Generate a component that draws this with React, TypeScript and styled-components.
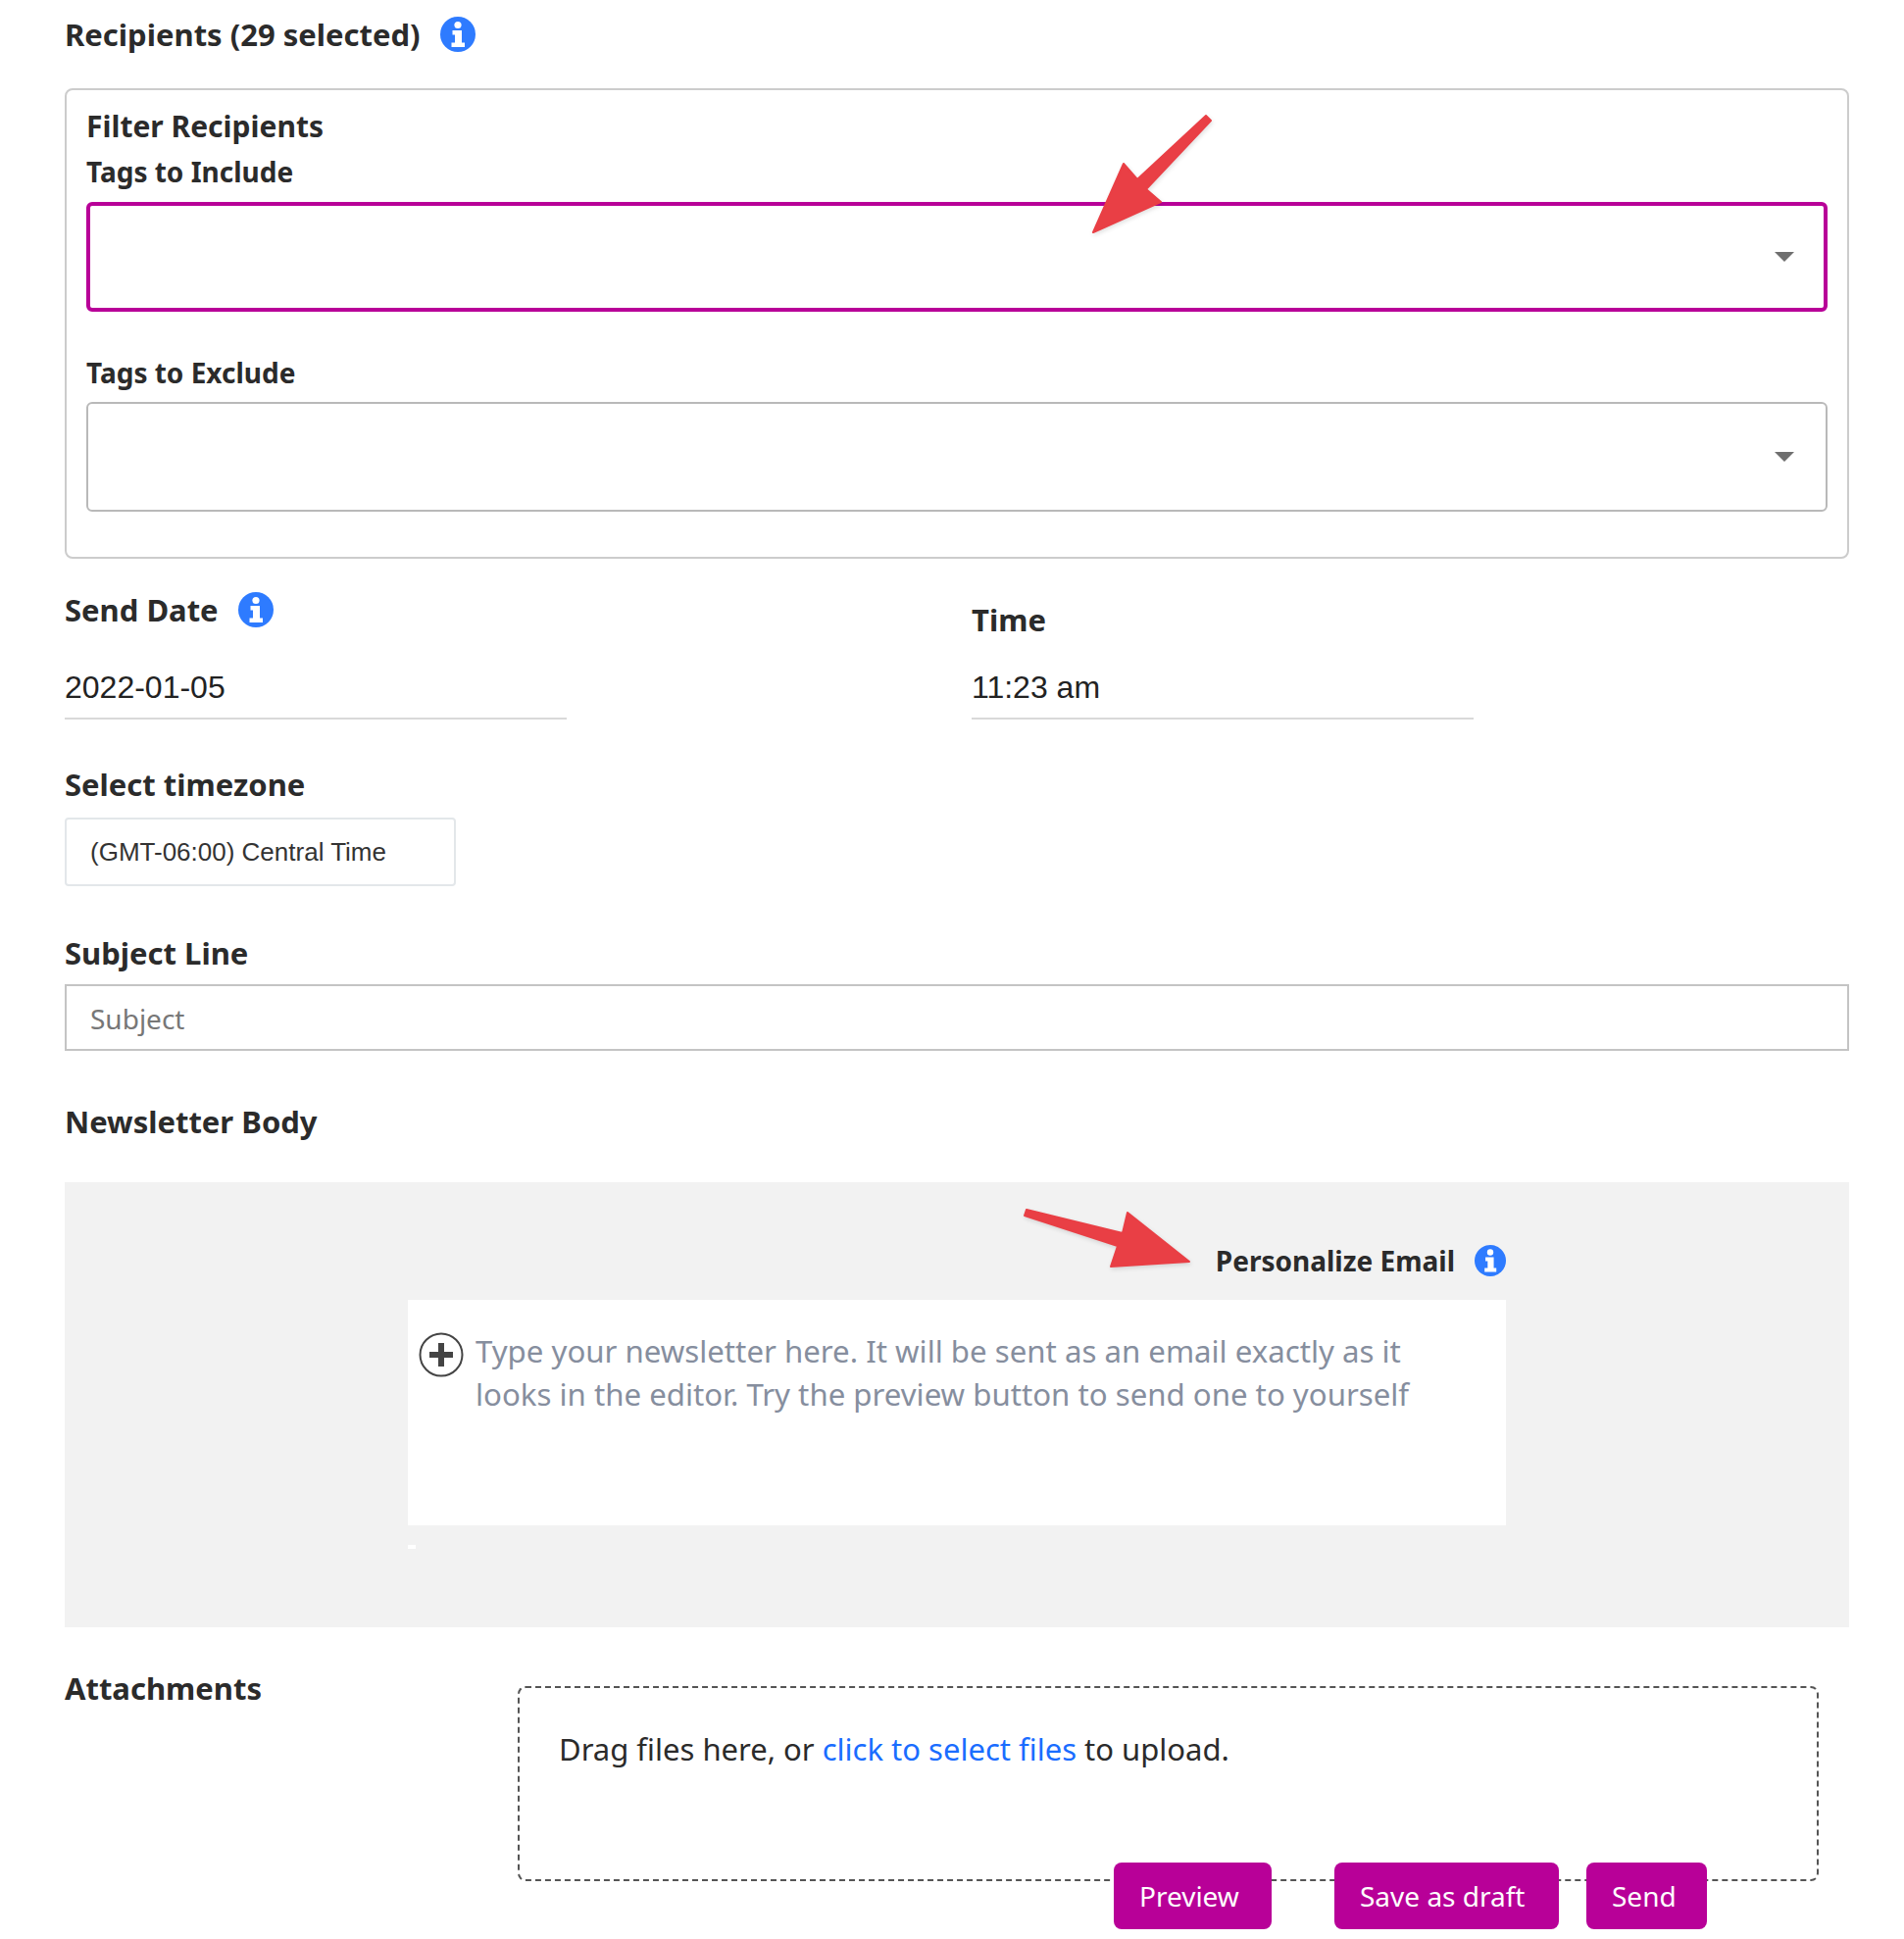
import styled, { createGlobalStyle } from 'styled-components';

const magenta = '#b80098';

const GlobalStyle = createGlobalStyle`
    html, body {
        margin: 0;
        padding: 0;
        background: #fff;
    }
    body {
        font-family: "Noto Sans", "Open Sans", sans-serif;
        color: #2b2b2b;
    }
`
const Page = styled.div`
    position: relative;
    box-sizing: border-box;
    width: 1942px;
    height: 1978px;
    padding: 17px 56px 0 66px;
    overflow: hidden;
`
const Heading = styled.div<{ $top?: number }>`
    display: flex;
    align-items: center;
    gap: 20px;
    height: 36px;
    margin-top: ${p => p.$top || 0}px;
    font-size: 31px;
    font-weight: 700;
    line-height: 36px;
`
const InfoSvg = styled.svg<{ $size?: number }>`
    width: ${p => p.$size || 36}px;
    height: ${p => p.$size || 36}px;
    flex: none;
`
const Filter = styled.div`
    box-sizing: border-box;
    height: 480px;
    margin-top: 37px;
    padding: 21px 20px 0;
    border: 2px solid #cccccc;
    border-radius: 8px;
`
const FilterTitle = styled.div`
    font-size: 30px;
    font-weight: 700;
    line-height: 32px;
`
const SmallLabel = styled.div<{ $top: number }>`
    margin-top: ${p => p.$top}px;
    font-size: 28px;
    font-weight: 700;
    line-height: 30px;
`
const Select = styled.div<{ $active?: boolean; $top: number }>`
    box-sizing: border-box;
    display: flex;
    align-items: center;
    justify-content: flex-end;
    height: 112px;
    margin-top: ${p => p.$top}px;
    padding-right: ${p => (p.$active ? 30 : 32)}px;
    border: ${p => (p.$active ? `4px solid ${magenta}` : '2px solid #b9b9b9')};
    border-radius: 6px;
`
const Caret = styled.span`
    width: 0;
    height: 0;
    border-left: 10px solid transparent;
    border-right: 10px solid transparent;
    border-top: 10px solid #6f6f6f;
`
const DateRow = styled.div`
    display: grid;
    grid-template-columns: 925px 512px;
    margin-top: 34px;
`
const DateColumn = styled.div`
    display: flex;
    flex-direction: column;
`
const DateHead = styled.div<{ $shift?: number }>`
    box-sizing: border-box;
    height: 76px;
    padding-top: ${p => p.$shift || 0}px;
`
const DateValue = styled.div`
    box-sizing: border-box;
    width: 512px;
    height: 54px;
    border-bottom: 2px solid #d9d9d9;
    font-family: "Liberation Sans", Arial, sans-serif;
    font-size: 32px;
    line-height: 43px;
    color: #222;
`
const Label = styled.div<{ $top: number }>`
    margin-top: ${p => p.$top}px;
    font-size: 31px;
    font-weight: 700;
    line-height: 32px;
`
const Timezone = styled.div`
    box-sizing: border-box;
    display: flex;
    align-items: center;
    width: 399px;
    height: 70px;
    margin-top: 18px;
    padding-left: 24px;
    border: 2px solid #e3e7ea;
    border-radius: 4px;
    font-family: "Liberation Sans", Arial, sans-serif;
    font-size: 26px;
    color: #333;
`
const SubjectInput = styled.div`
    box-sizing: border-box;
    display: flex;
    align-items: center;
    height: 68px;
    margin-top: 16px;
    padding: 2px 0 0 24px;
    border: 2px solid #c4c4c4;
    font-size: 28px;
    color: #777;
`
const EditorPanel = styled.div`
    box-sizing: border-box;
    display: flex;
    flex-direction: column;
    align-items: center;
    height: 454px;
    margin-top: 46px;
    padding-top: 60px;
    background: #f2f2f2;
`
const EditorColumn = styled.div`
    width: 1120px;
`
const Personalize = styled.div`
    display: flex;
    align-items: center;
    justify-content: flex-end;
    gap: 20px;
    height: 40px;
    font-size: 28px;
    font-weight: 700;
`
const Editor = styled.div`
    box-sizing: border-box;
    display: flex;
    gap: 12px;
    height: 230px;
    margin-top: 20px;
    padding: 30px 0 0 11px;
    background: #fff;
`
const PlusIcon = styled.svg`
    width: 46px;
    height: 46px;
    margin-top: 3px;
    flex: none;
`
const Placeholder = styled.div`
    font-size: 31.2px;
    line-height: 44px;
    color: #868e9e;
`
const Dash = styled.div`
    width: 8px;
    height: 4px;
    margin-top: 20px;
    background: #fff;
`
const AttachRow = styled.div`
    display: flex;
    margin-top: 46px;
`
const AttachLabel = styled.div`
    width: 462px;
    font-size: 31px;
    font-weight: 700;
    line-height: 32px;
`
const DropZone = styled.div`
    box-sizing: border-box;
    width: 1327px;
    height: 199px;
    margin-top: 14px;
    padding: 40px 0 0 40px;
    border: 2px dashed #555;
    border-radius: 8px;
    font-size: 31px;
    line-height: 44px;
`
const FileLink = styled.a`
    color: #1a6dff;
`
const Actions = styled.div`
    position: relative;
    display: flex;
    margin-top: -19px;
    padding-left: 1070px;
`
const ActionButton = styled.button<{ $width: number; $left?: number }>`
    width: ${p => p.$width}px;
    height: 68px;
    margin-left: ${p => p.$left || 0}px;
    padding: 0 0 0 26px;
    border: none;
    border-radius: 8px;
    background: ${magenta};
    color: #fff;
    font-family: "Noto Sans", sans-serif;
    font-size: 28px;
    text-align: left;
`
const Arrow = styled.svg<{ $left: number; $top: number }>`
    position: absolute;
    left: ${p => p.$left}px;
    top: ${p => p.$top}px;
    overflow: visible;
    filter: drop-shadow(1px 2px 2px rgba(0, 0, 0, 0.12));
`

function InfoIcon({ size }: { size?: number }) {
    return (
        <InfoSvg $size={size} viewBox="0 0 36 36">
            <circle cx="18" cy="18" r="18" fill="#2e7bff" />
            <circle cx="18" cy="8.5" r="3.6" fill="#fff" />
            <path d="M12.5 14h9.5v12.5h3V31H11.5v-4.5h3.5v-8h-2.500z" fill="#fff" />
        </InfoSvg>
    )
}

function App() {
    return (
        <>
            <GlobalStyle />
            <Page>
                <Heading>
                    Recipients (29 selected)
                    <InfoIcon />
                </Heading>
                <Filter>
                    <FilterTitle>Filter Recipients</FilterTitle>
                    <SmallLabel $top={15}>Tags to Include</SmallLabel>
                    <Select $active $top={16}><Caret /></Select>
                    <SmallLabel $top={47}>Tags to Exclude</SmallLabel>
                    <Select $top={15}><Caret /></Select>
                </Filter>
                <DateRow>
                    <DateColumn>
                        <DateHead>
                            <Heading>
                                Send Date
                                <InfoIcon />
                            </Heading>
                        </DateHead>
                        <DateValue>2022-01-05</DateValue>
                    </DateColumn>
                    <DateColumn>
                        <DateHead $shift={10}>
                            <Heading>Time</Heading>
                        </DateHead>
                        <DateValue>11:23 am</DateValue>
                    </DateColumn>
                </DateRow>
                <Label $top={50}>Select timezone</Label>
                <Timezone>(GMT-06:00) Central Time</Timezone>
                <Label $top={52}>Subject Line</Label>
                <SubjectInput>Subject</SubjectInput>
                <Label $top={56}>Newsletter Body</Label>
                <EditorPanel>
                    <EditorColumn>
                        <Personalize>
                            Personalize Email
                            <InfoIcon size={32} />
                        </Personalize>
                        <Editor>
                            <PlusIcon viewBox="0 0 46 46">
                                <circle cx="23" cy="23" r="21.5" fill="#fff" stroke="#444" strokeWidth="2" />
                                <path d="M20 11h6v9h9v6h-9v9h-6v-9h-9v-6h9z" fill="#444" />
                            </PlusIcon>
                            <Placeholder>
                                Type your newsletter here. It will be sent as an email exactly as it
                                <br />
                                looks in the editor. Try the preview button to send one to yourself
                            </Placeholder>
                        </Editor>
                        <Dash />
                    </EditorColumn>
                </EditorPanel>
                <AttachRow>
                    <AttachLabel>Attachments</AttachLabel>
                    <DropZone>
                        Drag files here, or <FileLink>click to select files</FileLink> to upload.
                    </DropZone>
                </AttachRow>
                <Actions>
                    <ActionButton $width={161}>Preview</ActionButton>
                    <ActionButton $width={229} $left={64}>Save as draft</ActionButton>
                    <ActionButton $width={123} $left={28}>Send</ActionButton>
                </Actions>
                <Arrow $left={1114} $top={117} width="122" height="121" viewBox="0 0 122 121">
                    <path
                        d="M116 1 L121 6 L55 76 L70 89 L1 120 L32 50 L46 66 Z"
                        fill="#e93f45"
                        stroke="#e93f45"
                        strokeWidth="2"
                        strokeLinejoin="round"
                    />
                </Arrow>
                <Arrow $left={1045} $top={1233} width="169" height="60" viewBox="0 0 169 60">
                    <path
                        d="M2 1 L100 25 L105 4 L168 54 L88 59 L95 38 L0 7 Z"
                        fill="#e93f45"
                        stroke="#e93f45"
                        strokeWidth="2"
                        strokeLinejoin="round"
                    />
                </Arrow>
            </Page>
        </>
    )
}

export default App
